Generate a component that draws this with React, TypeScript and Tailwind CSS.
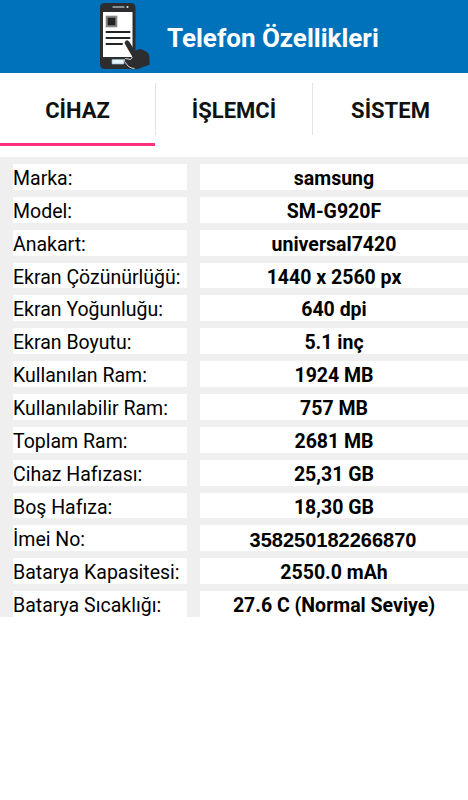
const rows: [string, string][] = [
  ["Marka:", "samsung"],
  ["Model:", "SM-G920F"],
  ["Anakart:", "universal7420"],
  ["Ekran Çözünürlüğü:", "1440 x 2560 px"],
  ["Ekran Yoğunluğu:", "640 dpi"],
  ["Ekran Boyutu:", "5.1 inç"],
  ["Kullanılan Ram:", "1924 MB"],
  ["Kullanılabilir Ram:", "757 MB"],
  ["Toplam Ram:", "2681 MB"],
  ["Cihaz Hafızası:", "25,31 GB"],
  ["Boş Hafıza:", "18,30 GB"],
  ["İmei No:", "358250182266870"],
  ["Batarya Kapasitesi:", "2550.0 mAh"],
  ["Batarya Sıcaklığı:", "27.6 C (Normal Seviye)"],
];

function PhoneIcon() {
  return (
    <svg width="54" height="72" viewBox="0 0 54 72" className="shrink-0">
      <rect x="3" y="3" width="35.5" height="66" rx="4.5" fill="#2d2d2f" />
      <path d="M16 7h11" stroke="#e8eef2" strokeWidth="1.2" strokeLinecap="round" />
      <circle cx="30.5" cy="7" r="1" fill="#e8eef2" />
      <rect x="6" y="12" width="29.5" height="45" fill="#fff" />
      <rect x="9.7" y="16.7" width="9.6" height="9.6" fill="#222" stroke="#858585" strokeWidth="2" />
      <path d="M9.5 32H32.5M9.5 38H32.5M9.5 44H25" stroke="#202426" strokeWidth="2" strokeLinecap="round" />
      <rect x="15" y="59.5" width="12" height="4.5" rx="0.5" fill="#e9f5fb" stroke="#8eb9cf" strokeWidth="0.7" />
      <path
        d="M28.5 41q2-2 4 1l5.5 9 3-1.5q2-1 4 0l4 2q3.500 2 3.500 6v5l.5 2-12 4.500H38q-4 1-7-2l-4-5q-1-2 1-3l6 1 2-2-8-14q-1-2 .5-3Z"
        fill="#2d2d2f"
      />
      <path
        d="M35.5 57l-2 2.500-5-1q-2 1-1 3l4 5q3 2 6 2"
        fill="none"
        stroke="#fff"
        strokeWidth="0.8"
      />
    </svg>
  );
}

export default function App() {
  return (
    <div className="h-[800px] w-[468px] overflow-hidden bg-white font-[Roboto,sans-serif] text-black">
      <header className="flex h-[73px] bg-[#0072bc] pl-[97px]">
        <PhoneIcon />
        <h1 className="ml-4 mt-5 text-[26px] font-bold leading-9 whitespace-nowrap text-white">Telefon Özellikleri</h1>
      </header>
      <nav className="flex h-[84px] pt-[10px] text-[22px] font-bold leading-[55px] text-[#111]">
        <div className="flex w-[156px] flex-col">
          <div className="h-[52px] border-r border-[#e3e3e3] text-center">CİHAZ</div>
          <div className="mt-2 h-[3px] w-[155px] bg-[#ff2e7e]" />
        </div>
        <div className="h-[52px] w-[157px] border-r border-[#e3e3e3] text-center">İŞLEMCİ</div>
        <div className="h-[52px] flex-1 text-center">SİSTEM</div>
      </nav>
      <main className="grid h-[460px] auto-rows-fr bg-[#efefef]">
        {rows.map(([label, value]) => (
          <div key={label} className="flex pt-[7px] pl-[13px] text-[19.500px] leading-[30px] whitespace-nowrap">
            <div className="h-full w-[174px] bg-white">{label}</div>
            <div
              className={
                label === "İmei No:"
                  ? "ml-[13px] h-full w-[268px] bg-white pr-[2px] text-center font-['Liberation_Sans',Arial,sans-serif] text-[20px] font-bold"
                  : "ml-[13px] h-full w-[268px] bg-white text-center font-bold"
              }
            >
              {value}
            </div>
          </div>
        ))}
      </main>
    </div>
  );
}
